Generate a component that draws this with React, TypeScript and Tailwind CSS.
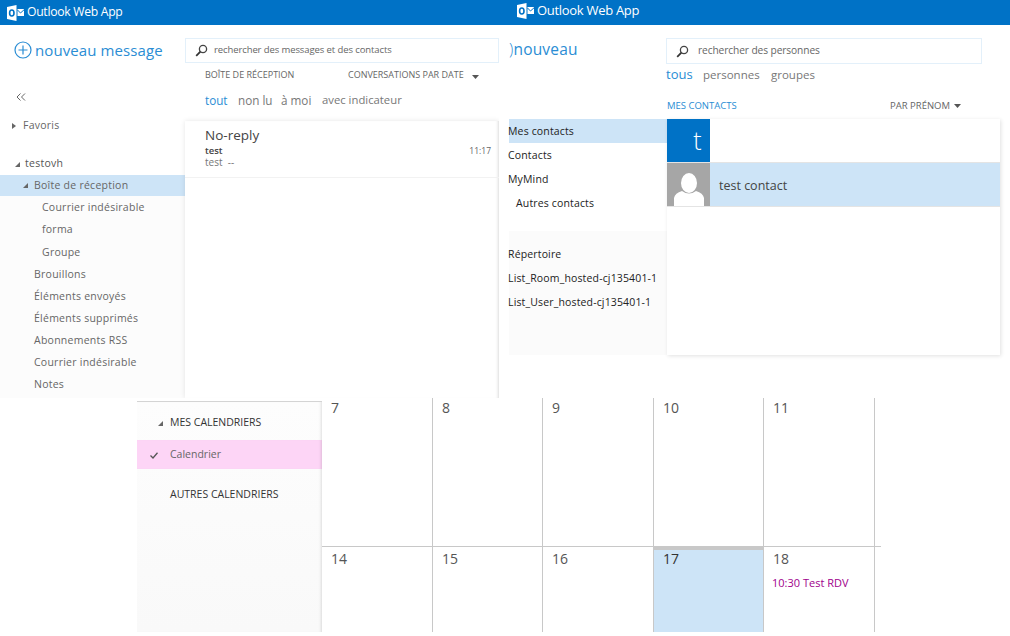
const font = { fontFamily: '"Open Sans", "Noto Sans", sans-serif' };

function Logo() {
  return (
    <svg width="17" height="16" viewBox="0 0 17 16" className="shrink-0">
      <path d="M0 2 L9.5 0 V16 L0 14 Z" fill="#fff" />
      <ellipse cx="4.8" cy="8" rx="2.2" ry="3" fill="none" stroke="#0072c6" strokeWidth="1.6" />
      <rect x="10.5" y="4" width="6.5" height="7" fill="#fff" />
      <path d="M10.5 5 L13.5 8 L17 4.8" fill="none" stroke="#0072c6" strokeWidth="1" />
    </svg>
  );
}

function Search({ label, cls, textCls }: { label: string; cls: string; textCls: string }) {
  return (
    <div className={`flex items-center border border-[#e3f0fa] bg-white ${cls}`}>
      <svg width="13" height="13" viewBox="0 0 13 13" className="shrink-0 ml-[9px]">
        <circle cx="8" cy="5" r="3.6" fill="none" stroke="#444" strokeWidth="1.3" />
        <path d="M5.4 7.6 L1.2 11.8" stroke="#333" strokeWidth="1.8" />
      </svg>
      <span className={`tracking-[-0.1px] text-[#666] ${textCls}`}>{label}</span>
    </div>
  );
}

function Tri({ cls = "" }: { cls?: string }) {
  return (
    <svg width="5" height="5" viewBox="0 0 5 5" className={`shrink-0 ${cls}`}>
      <path d="M5 0 V5 H0 Z" fill="#666" />
    </svg>
  );
}

function Caret({ cls = "" }: { cls?: string }) {
  return (
    <svg width="7" height="4" viewBox="0 0 7 4" className={`shrink-0 ${cls}`}>
      <path d="M0 0 H7 L3.5 4 Z" fill="#555" />
    </svg>
  );
}

function MailNav() {
  const rows = ["Brouillons", "Éléments envoyés", "Éléments supprimés", "Abonnements RSS", "Courrier indésirable", "Notes"];
  return (
    <div className="w-[185px] shrink-0 flex flex-col text-[10.5px] text-[#666] tracking-[0.25px]">
      <div className="flex items-center h-[50px] pl-[14px]">
        <svg width="18" height="18" viewBox="0 0 18 18" className="shrink-0">
          <circle cx="9" cy="9" r="8" fill="none" stroke="#2a8dd4" strokeWidth="1.2" />
          <path d="M9 4.5 V13.5 M4.5 9 H13.5" stroke="#2a8dd4" strokeWidth="1.2" />
        </svg>
        <span className="ml-[3px] text-[15px] text-[#2a8dd4] tracking-[0.1px] whitespace-nowrap">nouveau message</span>
      </div>
      <div className="pl-[16px] mt-[13px] h-[18px] flex items-center">
        <svg width="10" height="8" viewBox="0 0 10 8">
          <path d="M4.5 0.5 L1 4 L4.5 7.5 M9 0.5 L5.5 4 L9 7.5" fill="none" stroke="#666" strokeWidth="1" />
        </svg>
      </div>
      <div className="flex items-center h-[16px] mt-[12px] pl-[12px]">
        <svg width="4" height="6" viewBox="0 0 4 6" className="shrink-0">
          <path d="M0 0 L4 3 L0 6 Z" fill="#666" />
        </svg>
        <span className="ml-[7px]">Favoris</span>
      </div>
      <div className="flex items-center h-[16px] mt-[22px] pl-[15px]">
        <Tri />
        <span className="ml-[5px] text-[#555]">testovh</span>
      </div>
      <div className="flex items-center h-[21px] mt-[3px] pl-[23px] bg-[#cde4f7]">
        <Tri />
        <span className="ml-[6px]">Boîte de réception</span>
      </div>
      <div className="flex-1 bg-[#fcfcfc] flex flex-col">
        <div className="h-[22px] leading-[22px] pl-[42px]">Courrier indésirable</div>
        <div className="h-[22px] leading-[22px] pl-[42px]">forma</div>
        <div className="h-[23px] leading-[24px] pl-[42px]">Groupe</div>
        {rows.map((s, i) => (
          <div key={i} className="h-[22px] leading-[22px] pl-[34px]">{s}</div>
        ))}
      </div>
    </div>
  );
}

function MailMain() {
  return (
    <div className="w-[314px] shrink-0 flex flex-col">
      <Search
        label="rechercher des messages et des contacts"
        cls="h-[25px] mt-[13px] w-[314px]"
        textCls="ml-[6px] text-[9.5px]"
      />
      <div className="flex items-center h-[24px] pl-[20px] text-[9px] text-[#666] uppercase">
        <span className="w-[143px]">Boîte de réception</span>
        <span>Conversations par date</span>
        <Caret cls="ml-[8px] mt-[4px]" />
      </div>
      <div className="flex items-center h-[25px] mt-[1px] pl-[20px] text-[11.7px] text-[#777]">
        <span className="text-[#2a8dd4] w-[33px]">tout</span>
        <span className="w-[43px]">non lu</span>
        <span className="w-[41px]">à moi</span>
        <span className="text-[11.3px]">avec indicateur</span>
      </div>
      <div className="flex-1 mt-[8px] bg-white shadow-[0_0_5px_rgba(0,0,0,0.1),inset_-3px_0_3px_-2px_rgba(0,0,0,0.14)]">
        <div className="h-[57px] pl-[20px] pt-[6px] border-b border-[#f2f2f2]">
          <div className="text-[13.5px] leading-[16px] text-[#444]">No-reply</div>
          <div className="flex justify-between pr-[8px] text-[9.5px] leading-[13px] mt-[1px]">
            <span className="font-semibold text-[#444]">test</span>
            <span className="text-[8.5px] text-[#666]">11:17</span>
          </div>
          <div className="text-[10px] leading-[12px] text-[#777] -mt-[1px]">test&nbsp; --</div>
        </div>
      </div>
    </div>
  );
}

function ContactsNav() {
  return (
    <div className="w-[168px] shrink-0 flex flex-col text-[10.5px] text-[#222] tracking-[0.15px]">
      <div className="h-[50px] pl-[10px] flex items-center overflow-hidden">
        <span className="text-[15.5px] text-[#2a8dd4] tracking-[0.2px]">
          <span className="font-light">)</span>nouveau
        </span>
      </div>
      <div className="flex-1 mt-[44px] flex flex-col">
        <div className="flex-1 bg-white flex flex-col pl-[10px] indent-[-1px]">
          <div className="h-[24px] leading-[24px] bg-[#cde4f7]">Mes contacts</div>
          <div className="h-[24px] leading-[24px]">Contacts</div>
          <div className="h-[24px] leading-[24px]">MyMind</div>
          <div className="h-[24px] leading-[24px] pl-[8px]">Autres contacts</div>
          <div className="flex-1 mt-[16px] bg-[#fbfbfb] pt-[11px]">
            <div className="h-[24px] leading-[24px]">Répertoire</div>
            <div className="h-[24px] leading-[24px]">List_Room_hosted-cj135401-1</div>
            <div className="h-[24px] leading-[24px]">List_User_hosted-cj135401-1</div>
          </div>
        </div>
      </div>
    </div>
  );
}

function ContactsMain() {
  return (
    <div className="w-[333px] shrink-0 flex flex-col">
      <Search
        label="rechercher des personnes"
        cls="h-[26px] mt-[13px] w-[316px] -ml-[1px]"
        textCls="ml-[9px] text-[10.2px]"
      />
      <div className="flex items-center h-[22px] text-[11.5px] text-[#777] -ml-[1px]">
        <span className="text-[#2a8dd4] w-[37px] text-[13px]">tous</span>
        <span className="w-[68px]">personnes</span>
        <span>groupes</span>
      </div>
      <div className="flex items-center h-[26px] mt-[7px] text-[9.5px] uppercase text-[#666]">
        <span className="text-[#2a8dd4] w-[223px]">Mes contacts</span>
        <span>Par prénom</span>
        <Caret cls="ml-[4px]" />
      </div>
      <div className="flex-1 bg-white shadow-[1px_1px_4px_rgba(0,0,0,0.12)] flex flex-col">
        <div className="h-[44px] border-b border-[#e4e4e4]">
          <div className="w-[43px] h-[43px] bg-[#0072c6] flex items-center justify-center pl-[18px] text-[25px] font-light text-white">
            t
          </div>
        </div>
        <div className="h-[44px] flex bg-[#cde4f7] border-b border-[#e4e4e4]">
          <div className="w-[43px] h-[43px] bg-[#a6a6a6] flex items-end justify-center">
            <svg width="30" height="33" viewBox="0 0 30 33">
              <ellipse cx="15" cy="10" rx="8" ry="10" fill="#fff" />
              <path d="M0 33 V25 Q1 20 8 18 Q15 23 22 18 Q29 20 30 25 V33 Z" fill="#fff" />
            </svg>
          </div>
          <span className="ml-[9px] leading-[45px] text-[12.5px] text-[#444]">test contact</span>
        </div>
      </div>
    </div>
  );
}

function DayCell({ n, today, second, event }: { n: number; today?: boolean; second?: boolean; event?: string }) {
  return (
    <div
      className={`border-r border-[#c8c8c8] pl-[9px] ${
        today ? "bg-[#cde4f7] border-t-[3px] border-t-[#c8c8c8]" : second ? "pt-[2px]" : ""
      }`}
    >
      <div className={`text-[14px] leading-[20px] ${today ? "text-[#333] -mt-[1px]" : "text-[#555]"}`}>{n}</div>
      {event && <div className="-ml-[1px] mt-[7px] text-[11px] leading-[14px] text-[#a0008c] whitespace-nowrap">{event}</div>}
    </div>
  );
}

function Calendar() {
  const row1 = [7, 8, 9, 10, 11];
  const row2 = [14, 15, 16, 17, 18];
  return (
    <div className="flex h-[234px] pl-[137px]">
      <div className="w-[185px] shrink-0 flex flex-col text-[10.5px] text-[#333] mt-[3px] border-t border-[#d4d4d4] bg-gradient-to-b from-[#fdfdfd] to-[#f9f9f9] shadow-[inset_-3px_0_3px_-2px_rgba(0,0,0,0.12)]">
        <div className="flex items-center h-[38px] pl-[21px] pt-[4px]">
          <Tri />
          <span className="ml-[7px] uppercase">Mes calendriers</span>
        </div>
        <div className="flex items-center h-[29px] pl-[13px] pt-[1px] bg-[#fdd5f6] text-[#666] shadow-[inset_-3px_0_3px_-2px_rgba(0,0,0,0.12)]">
          <svg width="8" height="7" viewBox="0 0 8 7" className="shrink-0">
            <path d="M0.5 3.5 L3 6 L7.5 0.8" fill="none" stroke="#555" strokeWidth="1.3" />
          </svg>
          <span className="ml-[12px]">Calendrier</span>
        </div>
        <div className="h-[25px] mt-[13px] leading-[25px] pl-[33px] uppercase">Autres calendriers</div>
      </div>
      <div className="flex flex-col">
        <div className="grid grid-cols-[111px_110px_111px_110px_111px] h-[148px]">
          {row1.map((n) => (
            <DayCell key={n} n={n} />
          ))}
        </div>
        <div className="grid grid-cols-[111px_110px_111px_110px_111px_6px] h-[86px] border-t border-[#c8c8c8]">
          {row2.map((n) => (
            <DayCell key={n} n={n} second today={n === 17} event={n === 18 ? "10:30 Test RDV" : undefined} />
          ))}
        </div>
      </div>
    </div>
  );
}

export default function App() {
  return (
    <div className="w-[1010px] h-[636px] bg-white overflow-hidden flex flex-col" style={font}>
      <div className="flex h-[25px] bg-[#0072c6] text-white">
        <div className="w-[509px] flex items-center pl-[7px] text-[12.2px] tracking-[-0.3px]">
          <Logo />
          <span className="ml-[3px]">Outlook Web App</span>
        </div>
        <div className="flex items-center pl-[8px] text-[13px] tracking-[-0.3px] -mt-[3px]">
          <Logo />
          <span className="ml-[3px]">Outlook Web App</span>
        </div>
      </div>
      <div className="flex h-[373px]">
        <div className="flex w-[499px] shrink-0 overflow-hidden">
          <MailNav />
          <MailMain />
        </div>
        <div className="flex h-[330px] shrink-0">
          <ContactsNav />
          <ContactsMain />
        </div>
      </div>
      <Calendar />
    </div>
  );
}
